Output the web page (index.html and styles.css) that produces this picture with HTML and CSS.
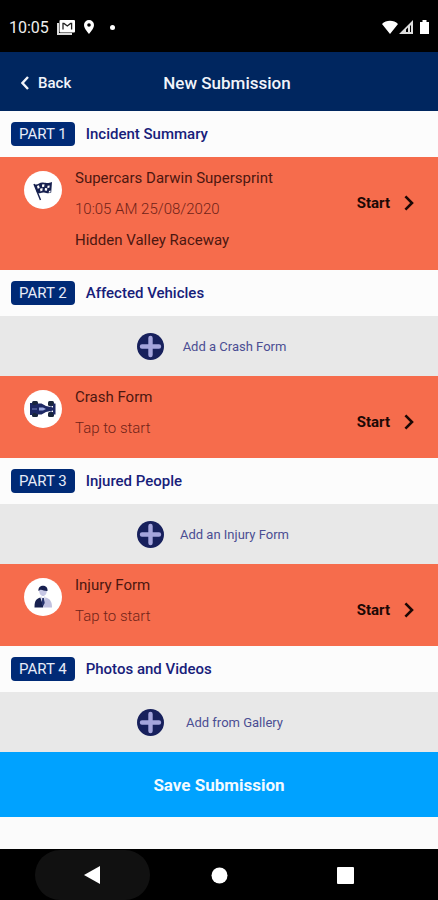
FILE: index.html
```html
<!DOCTYPE html>
<html lang="en">
<head>
<meta charset="utf-8">
<meta name="viewport" content="width=device-width, initial-scale=1">
<title>New Submission</title>
<link rel="stylesheet" href="styles.css">
</head>
<body>
<svg class="defs" aria-hidden="true">
  <symbol id="plus" viewBox="0 0 27 27">
    <circle cx="13.5" cy="13.5" r="13.5" fill="#17205c"/>
    <path d="M13.5 5v17M5 13.5h17" stroke="#a5a5dc" stroke-width="4.4" stroke-linecap="round"/>
  </symbol>
  <symbol id="chevron" viewBox="0 0 10 16">
    <path d="M1.4 1.4 8 8l-6.600 6.600" fill="none" stroke="currentColor" stroke-width="2.600"/>
  </symbol>
</svg>
<div class="screen">
  <div class="status">
    <span class="time">10:05</span>
    <svg class="mail" width="18" height="15" viewBox="0 0 18 15"><path d="M1 3v11h14" fill="none" stroke="#ddd" stroke-width="2"/><rect x="2.500" y="0" width="15.500" height="12.500" rx="1" fill="#fff"/><path d="M6 9.500V3.500h1l3.300 2.500 3.300-2.500h1v6" fill="none" stroke="#222" stroke-width="1.300"/></svg>
    <svg class="pin" width="10" height="14" viewBox="0 0 10 14"><path fill="#fff" fill-rule="evenodd" d="M5 0a5 5 0 0 0-5 5c0 3.500 5 9 5 9s5-5.500 5-9a5 5 0 0 0-5-5zm0 3.200a1.800 1.800 0 1 1 0 3.600 1.800 1.800 0 0 1 0-3.600z"/></svg>
    <span class="dot"></span>
    <svg class="signals" width="48" height="15" viewBox="0 0 48 15"><path fill="#fff" d="M0 4C4-.4 12-.4 16 4L8 14zM38 2h2.500V0h4v2H47v12h-9z"/><path fill="#ddd" fill-rule="evenodd" d="M17 14 31 0v14zm7-2h2V7.500l-2 2zm4 0h1V5l-1 1z"/></svg>
  </div>
  <header class="header">
    <button class="back" type="button"><svg width="8" height="14" viewBox="0 0 8 14"><path d="M7 1 1.500 7 7 13" fill="none" stroke="currentColor" stroke-width="2.400"/></svg>Back</button>
    <h1>New Submission</h1>
  </header>
  <main>
    <section>
      <h2><span class="part">PART 1</span>Incident Summary</h2>
      <div class="card">
        <svg class="avatar" viewBox="0 0 38 38" aria-hidden="true"><circle cx="19" cy="19" r="19" fill="#fff"/><path d="M10 13c4 2 5-2 9-1.500s5 1 9-.5l-.8 10.500c-4 2-5-.5-8 0s-4 1.500-6 .2z" fill="#17204f"/><path d="m10 13 6.500 16" stroke="#17204f" stroke-width="1.400"/><path d="m13 15 2-.7.7 2.700-2 .7zm5-1.500 2.500-.3-.3 2.600-2 .5zm5.500 1.200 2.200-.2-.3 2.300-2 .2zm-7.500 3 2.500-.7v2.600l-2 .8zm5-.8 2.300.3-.3 2.600-2.300-.4zm4 3 1.600-.3-.1 1.600-1.800.5z" fill="#fff"/></svg>
        <div class="text"><p class="title">Supercars Darwin Supersprint</p><p class="note">10:05 AM 25/08/2020</p><p class="title">Hidden Valley Raceway</p></div>
        <button class="start" type="button">Start<svg class="chevron"><use href="#chevron"/></svg></button>
      </div>
    </section>
    <section>
      <h2><span class="part">PART 2</span>Affected Vehicles</h2>
      <button class="add" type="button"><span class="add-inner"><svg class="plus"><use href="#plus"/></svg><span class="add-label">Add a Crash Form</span></span></button>
      <div class="card">
        <svg class="avatar" viewBox="0 0 38 38" aria-hidden="true"><circle cx="19" cy="19" r="19" fill="#fff"/><g fill="#19263b"><rect x="8" y="11" width="6" height="5" rx="1.500"/><rect x="8" y="22" width="6" height="5" rx="1.500"/><rect x="24" y="11" width="6" height="5" rx="1.500"/><rect x="24" y="22" width="6" height="5" rx="1.500"/></g><path fill="#1d2864" d="M6 13h2.500v2H11l3-1.500h3.500l4.500 2.500 7 1.500v-4h2.500v11H29v-4L22 22l-4.500 2.500H14L11 23H8.500v2H6z"/><path d="M27 15v8M11 15v8" stroke="#1d2864"/><path d="M15 17.500h4l3 1.500-3 1.500h-4z" fill="#9caae0"/><path d="M8 19h5" stroke="#7582bd"/></svg>
        <div class="text"><p class="title">Crash Form</p><p class="note">Tap to start</p></div>
        <button class="start" type="button">Start<svg class="chevron"><use href="#chevron"/></svg></button>
      </div>
    </section>
    <section>
      <h2><span class="part">PART 3</span>Injured People</h2>
      <button class="add" type="button"><span class="add-inner"><svg class="plus"><use href="#plus"/></svg><span class="add-label">Add an Injury Form</span></span></button>
      <div class="card">
        <svg class="avatar" viewBox="0 0 38 38" aria-hidden="true"><circle cx="19" cy="19" r="19" fill="#fff"/><path d="M15 11c0 5 2 7 4 7s4-2 4-7z" fill="#c6c6e4"/><path d="M14.500 13c-1-7 10-7 9 0-3 .3-6-2-7.500-1z" fill="#17204f"/><path d="M10.500 29.500c0-7 1.500-8.500 6-10L19 25v4.500z" fill="#17204f"/><path d="M19 29.500V25l2.500-5.500C26 21 28 23 28 29.500z" fill="#c0c0df"/><path d="m17 18 2 2 2-2 .5 2L19 27l-2.500-7z" fill="#dedeef"/><path d="m18.300 20h1.600l.8 5-1.500 3-1.500-3z" fill="#28346e"/></svg>
        <div class="text"><p class="title">Injury Form</p><p class="note">Tap to start</p></div>
        <button class="start" type="button">Start<svg class="chevron"><use href="#chevron"/></svg></button>
      </div>
    </section>
    <section>
      <h2><span class="part">PART 4</span>Photos and Videos</h2>
      <button class="add" type="button"><span class="add-inner"><svg class="plus"><use href="#plus"/></svg><span class="add-label">Add from Gallery</span></span></button>
    </section>
    <button class="save" type="button">Save Submission</button>
  </main>
  <nav class="nav" aria-label="System">
    <button class="pressed" type="button" aria-label="Back"><svg width="17" height="18" viewBox="0 0 17 18"><path d="M0 9 16 0v18z" fill="#fff"/></svg></button>
    <button type="button" aria-label="Home"><svg width="17" height="17" viewBox="0 0 17 17"><circle cx="8.500" cy="8.500" r="8" fill="#fff"/></svg></button>
    <button type="button" aria-label="Recents"><svg width="17" height="17" viewBox="0 0 17 17"><rect width="17" height="17" rx="1" fill="#fff"/></svg></button>
  </nav>
</div>
</body>
</html>
```
FILE: styles.css
```css
* { box-sizing: border-box; }
body { margin: 0; background: #fbfbfb; font-family: Roboto, "Liberation Sans", sans-serif; font-size: 15px; }
button { border: 0; padding: 0; background: none; color: inherit; font: inherit; cursor: pointer; }
h1, h2, p { margin: 0; }
svg { display: block; flex: none; }
.defs { display: none; }
.screen { min-height: 100vh; display: flex; flex-direction: column; }
main { flex: 1; }

.status { height: 52px; padding: 2px 8px 0 9px; display: flex; align-items: center; background: #000; color: #eee; font-size: 16px; }
.mail { margin-left: 8px; }
.pin { margin-left: 9px; }
.dot { width: 5px; height: 5px; margin-left: 16px; border-radius: 50%; background: #fff; }
.signals { margin-left: auto; }

.header { height: 59px; padding: 2px 21px 0; display: grid; grid-template-columns: 1fr auto 1fr; align-items: center; background: #00265f; color: #f1f4fa; }
.back { justify-self: start; display: flex; align-items: center; gap: 9px; font-weight: 500; }
h1 { padding-left: 16px; font-size: 17px; font-weight: 500; }

h2 { height: 46px; padding: 0 11px; display: flex; align-items: center; gap: 11px; background: #fcfcfc; color: #17207a; font-size: 15px; font-weight: 500; }
.part { height: 24px; padding: 0 8px; border-radius: 4px; background: #002a76; color: #e8ecf8; font-weight: 400; line-height: 24px; }

.card { padding: 6px 24px 14px; display: flex; align-items: flex-start; background: #f66c4c; }
.avatar { width: 38px; height: 38px; margin-top: 8px; }
.text { flex: 1; margin-left: 13px; line-height: 31px; }
.title { color: #4c1710; }
.note { color: #702318; font-weight: 300; }
.start { height: 20px; margin-top: 30px; display: flex; align-items: center; gap: 14px; color: #1c0805; font-weight: 700; }
.chevron { width: 10px; height: 16px; }

.add { width: 100%; height: 60px; display: flex; align-items: center; justify-content: center; background: #e8e8e8; color: #4b4e93; font-size: 13px; }
.add-inner { width: 164px; display: flex; align-items: center; gap: 4px; }
.plus { width: 27px; height: 27px; }
.add-label { flex: 1; text-align: center; }

.save { width: 100%; height: 65px; background: #00a2ff; color: #f3faff; font-size: 17px; font-weight: 700; }

.nav { height: 51px; padding: 1px 29px 0; display: flex; background: #000; }
.nav button { flex: 1; display: flex; align-items: center; justify-content: center; margin: 0 6px; }
.nav .pressed { border-radius: 25px; background: #111; }
```
